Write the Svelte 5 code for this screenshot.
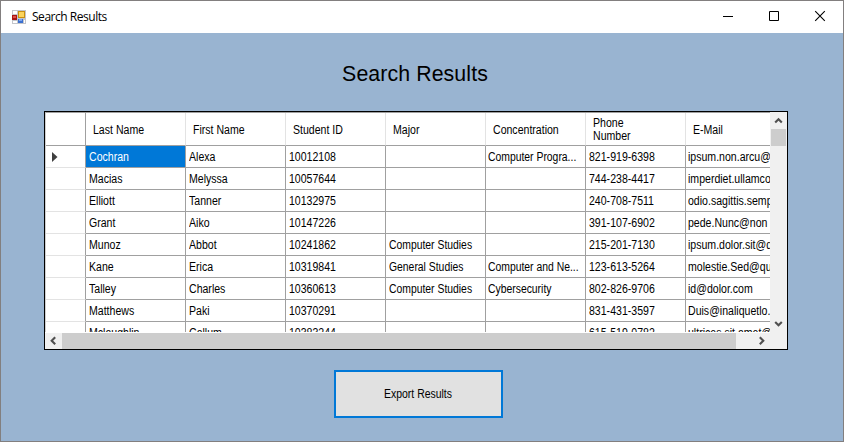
<script>
  const columns = ['Last Name', 'First Name', 'Student ID', 'Major', 'Concentration', 'Phone Number', 'E-Mail'];
  const rows = [
    ['Cochran', 'Alexa', '10012108', '', 'Computer Progra...', '821-919-6398', 'ipsum.non.arcu@'],
    ['Macias', 'Melyssa', '10057644', '', '', '744-238-4417', 'imperdiet.ullamco'],
    ['Elliott', 'Tanner', '10132975', '', '', '240-708-7511', 'odio.sagittis.semp'],
    ['Grant', 'Aiko', '10147226', '', '', '391-107-6902', 'pede.Nunc@non'],
    ['Munoz', 'Abbot', '10241862', 'Computer Studies', '', '215-201-7130', 'ipsum.dolor.sit@d'],
    ['Kane', 'Erica', '10319841', 'General Studies', 'Computer and Ne...', '123-613-5264', 'molestie.Sed@qu'],
    ['Talley', 'Charles', '10360613', 'Computer Studies', 'Cybersecurity', '802-826-9706', 'id@dolor.com'],
    ['Matthews', 'Paki', '10370291', '', '', '831-431-3597', 'Duis@inaliquetlo.'],
    ['Mclaughlin', 'Callum', '10383244', '', '', '615-519-0782', 'ultrices.sit.amet@']
  ];
</script>

<div class="window">
  <header class="titlebar">
    <svg class="app-icon" width="14" height="14" viewBox="0 0 14 14" shape-rendering="crispEdges">
      <rect width="14" height="14" fill="#c3c5ca" />
      <path d="M1 1h4v3H1zM1 11h4v2H1zM12 10h1v3h-1z" fill="#fff" />
      <rect x="6" y="1" width="7" height="7" fill="#c98f10" />
      <rect x="7" y="2" width="5" height="5" fill="#fbd45c" />
      <rect x="0" y="5" width="5" height="5" fill="#a91515" />
      <rect x="1" y="6" width="3" height="2" fill="#dd5048" />
      <rect x="6" y="9" width="5" height="4" fill="#3a6fd0" />
      <rect x="7" y="9" width="3" height="2" fill="#7fa8f0" />
    </svg>
    <span class="caption">Search Results</span>
    <div class="controls">
      <svg width="46" height="31" viewBox="0 0 46 31"><path d="M18 15.5h10" stroke="#000" /></svg>
      <svg width="46" height="31" viewBox="0 0 46 31"><path d="M18.5 10.5h9v9h-9z" fill="none" stroke="#000" /></svg>
      <svg width="46" height="31" viewBox="0 0 46 31"><path d="M18.2 10.2l9.6 9.6M27.8 10.2l-9.6 9.6" stroke="#000" stroke-width="1.1" /></svg>
    </div>
  </header>
  <main>
    <h1>Search Results</h1>
    <div class="grid">
      <div class="view">
        <div class="row head">
          <div class="stub"></div>
          {#each columns as c}
            <div class="cell"><span class="t">{#if c === 'Phone Number'}Phone<br />Number{:else}{c}{/if}</span></div>
          {/each}
        </div>
        {#each rows as row, i}
          <div class="row">
            <div class="stub">
              {#if i === 0}<svg width="6" height="10" viewBox="0 0 6 10"><path d="M0 0l5.5 5L0 10z" fill="#404040" /></svg>{/if}
            </div>
            {#each row as v, j}
              <div class="cell" class:selected={i === 0 && j === 0} class:tight={j === 3 || j === 4} class:shifted={j === 4 || j === 6}><span class="t">{v}</span></div>
            {/each}
          </div>
        {/each}
      </div>
      <div class="vscroll">
        <svg width="16" height="16" viewBox="0 0 16 16"><path d="M4.2 10.6L7.5 7.3l3.3 3.3" /></svg>
        <div class="vthumb"></div>
        <svg class="end" width="16" height="17" viewBox="0 0 16 17"><path d="M4.2 5.9l3.3 3.3 3.3-3.3" /></svg>
      </div>
      <div class="hscroll">
        <svg width="17" height="16" viewBox="0 0 17 16"><path d="M10.2 4.2L6.7 7.7l3.5 3.5" /></svg>
        <div class="hthumb"></div>
        <svg class="end" width="17" height="16" viewBox="0 0 17 16"><path d="M6.8 4.2l3.5 3.5-3.5 3.5" /></svg>
      </div>
    </div>
    <button><span>Export Results</span></button>
  </main>
</div>

<style>
  :global(body) { margin: 0; }
  .window {
    box-sizing: border-box;
    width: 844px;
    height: 442px;
    border: 1px solid #827f7f;
    background: #99b4d1;
    overflow: hidden;
    font: 12px/13px "Liberation Sans", Arial, sans-serif;
    color: #000;
  }
  .titlebar { display: flex; align-items: center; height: 32px; background: #fff; padding-left: 11px; box-sizing: border-box; }
  .caption { margin-left: 6px; font: 12px/16px "Open Sans", sans-serif; letter-spacing: -0.47px; }
  .controls { display: flex; margin-left: auto; height: 32px; }
  main { display: flex; flex-direction: column; align-items: center; }
  h1 { margin: 28px 0 0; font-size: 21.3px; line-height: 26px; font-weight: 400; letter-spacing: 0.1px; padding-right: 14px; }
  .grid {
    box-sizing: border-box;
    align-self: flex-start;
    width: 744px;
    height: 239px;
    margin: 24px 0 0 43px;
    border: 1px solid #000;
    display: grid;
    grid-template-columns: 726px 16px;
    grid-template-rows: 221px 16px;
    background: #f0f0f0;
  }
  .view { overflow: hidden; box-sizing: border-box; width: 725px; border-top: 1px solid #a0a0a0; border-left: 1px solid #d0d0d0; height: 220px; background: #fff; box-shadow: 0 1px #fff; }
  .row { display: flex; width: 740px; height: 22px; }
  .stub { box-sizing: border-box; width: 40px; flex: none; border-right: 1px solid #a0a0a0; border-bottom: 1px solid #e3e3e3; display: flex; align-items: center; padding: 1px 0 0 6px; }
  .cell { box-sizing: border-box; width: 100px; flex: none; border-right: 1px solid #a0a0a0; border-bottom: 1px solid #a0a0a0; padding: 2px 0 0 3px; display: flex; align-items: center; overflow: hidden; }
  .cell.shifted { padding-left: 2px; }
  .head { height: 33px; }
  .head .stub { border-bottom-color: #a0a0a0; }
  .head .cell { border-right-color: #e3e3e3; padding-left: 7px; }
  .t { white-space: nowrap; transform: scaleX(0.88); transform-origin: 0 50%; }
  .tight .t { transform: scaleX(0.865); }
  .selected { background: #0078d7; color: #fff; }
  .vscroll { display: flex; flex-direction: column; }
  .vthumb { height: 17px; width: 15px; background: #cdcdcd; margin-top: 1px; }
  .hscroll { grid-column: 1 / 3; display: flex; }
  .hthumb { width: 674px; background: #cdcdcd; }
  .vscroll .end { margin-top: auto; }
  .hscroll .end { margin-left: 17px; }
  .vscroll path, .hscroll path { fill: none; stroke: #505050; stroke-width: 2.1; }
  button { width: 169px; height: 48px; margin: 20px 8px 0 0; padding: 0; border: 2px solid #0078d7; border-radius: 0; background: #e1e1e1; font: 12px/13px "Liberation Sans", Arial, sans-serif; color: #000; }
  button span { display: inline-block; transform: scaleX(0.87); }
</style>
